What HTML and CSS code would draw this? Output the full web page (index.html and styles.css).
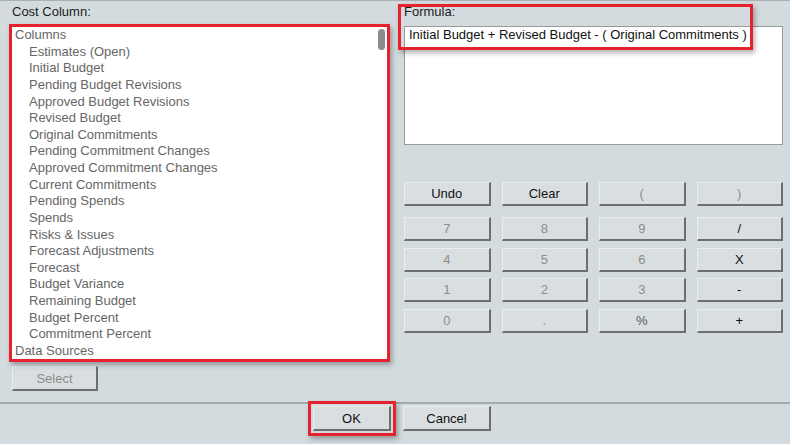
FILE: index.html
```html
<!DOCTYPE html>
<html lang="en">
<head>
    <meta charset="UTF-8">
    <title>Formula Builder</title>
    <link rel="stylesheet" href="styles.css">
</head>
<body>
    <div class="dialog">
        <div class="dialog-main">
            <div class="cost-column">
                <div class="field-label">Cost Column:</div>
                <div class="column-list marked">
                    <div class="list-group">Columns</div>
                    <div class="list-item">Estimates (Open)</div>
                    <div class="list-item">Initial Budget</div>
                    <div class="list-item">Pending Budget Revisions</div>
                    <div class="list-item">Approved Budget Revisions</div>
                    <div class="list-item">Revised Budget</div>
                    <div class="list-item">Original Commitments</div>
                    <div class="list-item">Pending Commitment Changes</div>
                    <div class="list-item">Approved Commitment Changes</div>
                    <div class="list-item">Current Commitments</div>
                    <div class="list-item">Pending Spends</div>
                    <div class="list-item">Spends</div>
                    <div class="list-item">Risks &amp; Issues</div>
                    <div class="list-item">Forecast Adjustments</div>
                    <div class="list-item">Forecast</div>
                    <div class="list-item">Budget Variance</div>
                    <div class="list-item">Remaining Budget</div>
                    <div class="list-item">Budget Percent</div>
                    <div class="list-item">Commitment Percent</div>
                    <div class="list-group">Data Sources</div>
                    <div class="scroll-thumb"></div>
                </div>
                <button class="btn disabled select-btn">Select</button>
            </div>

            <div class="formula-column">
                <div class="field-label">Formula:</div>
                <div class="formula-box">Initial Budget + Revised Budget - ( Original Commitments )</div>

                <div class="keypad keypad-controls">
                    <button class="btn">Undo</button>
                    <button class="btn">Clear</button>
                    <button class="btn disabled">(</button>
                    <button class="btn disabled">)</button>
                </div>
                <div class="keypad keypad-digits">
                    <button class="btn disabled">7</button>
                    <button class="btn disabled">8</button>
                    <button class="btn disabled">9</button>
                    <button class="btn">/</button>
                    <button class="btn disabled">4</button>
                    <button class="btn disabled">5</button>
                    <button class="btn disabled">6</button>
                    <button class="btn">X</button>
                    <button class="btn disabled">1</button>
                    <button class="btn disabled">2</button>
                    <button class="btn disabled">3</button>
                    <button class="btn">-</button>
                    <button class="btn disabled">0</button>
                    <button class="btn disabled">.</button>
                    <button class="btn dim">%</button>
                    <button class="btn">+</button>
                </div>

                <!-- annotation frame over label + first formula line -->
                <div class="formula-mark"></div>
            </div>
        </div>

        <div class="dialog-footer">
            <button class="btn ok-btn">OK</button>
            <button class="btn cancel-btn">Cancel</button>
        </div>
    </div>
</body>
</html>
```

FILE: styles.css
```css
html {
    background: #fff;
}

body {
    margin: 0;
    font-family: "Liberation Sans", Arial, sans-serif;
    font-size: 13px;
    color: #151515;
}

.dialog {
    width: 790px;
    height: 444px;
    box-sizing: border-box;
    background: #d3dbde;
    border-top: 1px solid #a9b1b4;
    display: flex;
    flex-direction: column;
}

.dialog-main {
    display: flex;
    gap: 17px;
    height: 401px;
    box-sizing: border-box;
    padding: 3px 0 0 12px;
}

.field-label {
    line-height: 16px;
    color: #1c1c1c;
}

/* left side */
.cost-column {
    width: 375px;
    display: flex;
    flex-direction: column;
    align-items: flex-start;
}

.cost-column .field-label {
    margin-bottom: 7px;
}

.column-list {
    position: relative;
    width: 375px;
    height: 332px;
    background: #fff;
    overflow: hidden;
    color: #666;
    line-height: 16.63px;
}

.list-group {
    padding-left: 3px;
}

.list-item {
    padding-left: 17px;
    white-space: nowrap;
}

.scroll-thumb {
    position: absolute;
    top: 2px;
    left: 366px;
    width: 7px;
    height: 21px;
    border-radius: 4px;
    background: #8b8b8b;
}

.marked {
    box-shadow: 0 0 0 3px #e6222f, 2px 3px 5px 3px rgba(0, 0, 0, 0.3);
}

.select-btn {
    margin-top: 7px;
    width: 86px;
}

/* right side */
.formula-column {
    position: relative;
    width: 379px;
}

.formula-box {
    margin-top: 6px;
    height: 119px;
    box-sizing: border-box;
    background: #fff;
    border: 1px solid #9a9a9a;
    padding: 0 4px;
    line-height: 16px;
    color: #111;
}

.formula-mark {
    position: absolute;
    left: -6px;
    top: 0;
    width: 355px;
    height: 46px;
    box-sizing: border-box;
    border: 3px solid #e6222f;
    box-shadow: 2px 3px 5px rgba(0, 0, 0, 0.3);
    pointer-events: none;
}

.keypad {
    display: grid;
    grid-template-columns: repeat(4, 1fr);
    column-gap: 11px;
}

.keypad .btn {
    height: 24px;
}

.keypad-controls {
    margin-top: 37px;
}

.keypad-digits {
    margin-top: 11px;
    row-gap: 6.5px;
}

/* buttons */
.btn {
    font: inherit;
    height: 25px;
    padding: 0;
    box-sizing: border-box;
    background: #d9dfe1;
    color: #111;
    border-top: 1px solid #eaeeef;
    border-left: 1px solid #eaeeef;
    border-right: 2px solid #6e6e6e;
    border-bottom: 2px solid #6e6e6e;
    cursor: pointer;
}

.btn.disabled {
    color: #8c8c8c;
}

.btn.dim {
    color: #5a5a5a;
}

/* footer */
.dialog-footer {
    flex: 1;
    border-top: 2px solid #a2aaad;
    display: flex;
    align-items: flex-start;
    gap: 12px;
    padding: 2px 0 0 313px;
}

.ok-btn {
    width: 78px;
    box-shadow: 0 0 0 2px #d3dbde, 0 0 0 5px #e6222f, 2px 3px 5px 5px rgba(0, 0, 0, 0.3);
}

.cancel-btn {
    width: 88px;
}
```
